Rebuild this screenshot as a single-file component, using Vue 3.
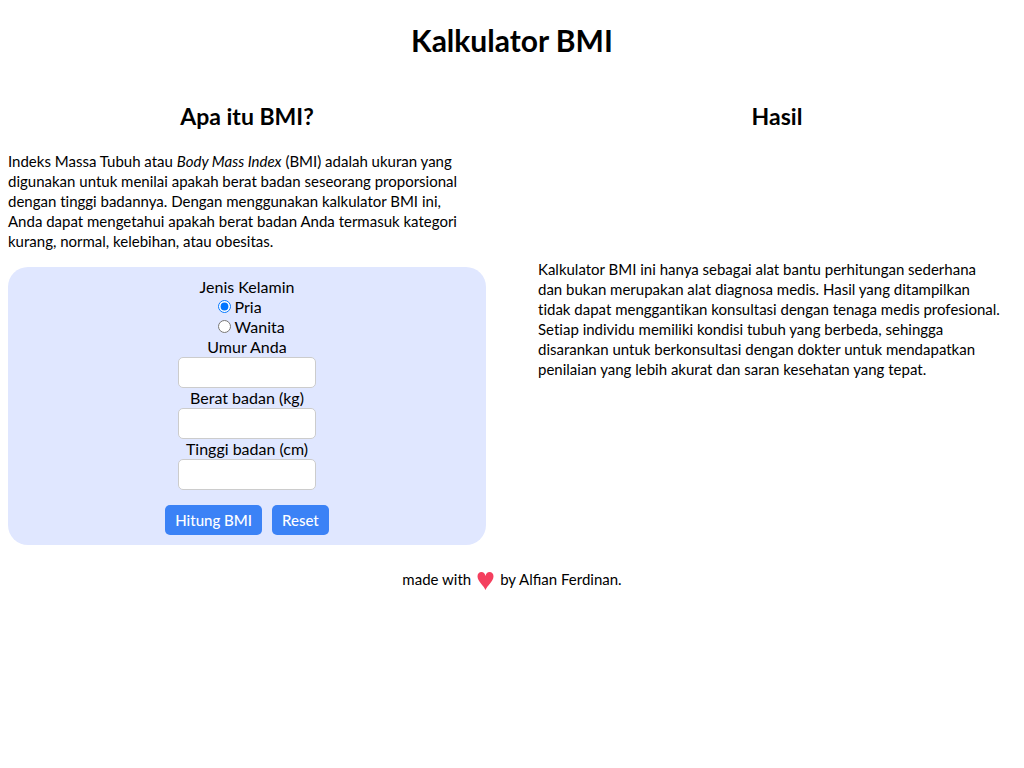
<script setup>
import { ref } from 'vue'

const gender = ref('pria')
const age = ref('')
const weight = ref('')
const height = ref('')
const bmi = ref('')

function calculate() {
  const metres = Number(height.value) / 100
  bmi.value = metres > 0 && weight.value ? (Number(weight.value) / (metres * metres)).toFixed(1) : ''
}

function reset() {
  gender.value = 'pria'
  age.value = ''
  weight.value = ''
  height.value = ''
  bmi.value = ''
}
</script>

<template>
  <div class="page">
    <h1>Kalkulator BMI</h1>
    <main class="columns">
      <section>
        <h2>Apa itu BMI?</h2>
        <p class="intro">
          Indeks Massa Tubuh atau <em>Body Mass Index</em> (BMI) adalah ukuran yang digunakan untuk menilai apakah berat badan seseorang proporsional dengan tinggi badannya. Dengan menggunakan kalkulator BMI ini, Anda dapat mengetahui apakah berat badan Anda termasuk kategori kurang, normal, kelebihan, atau obesitas.
        </p>
        <form class="card" @submit.prevent="calculate">
          <fieldset>
            <legend>Jenis Kelamin</legend>
            <div class="options">
              <label class="option"><input v-model="gender" type="radio" name="gender" value="pria">Pria</label>
              <label class="option"><input v-model="gender" type="radio" name="gender" value="wanita">Wanita</label>
            </div>
          </fieldset>
          <label for="age">Umur Anda</label>
          <input id="age" v-model="age" class="field" type="text" inputmode="numeric">
          <label for="weight">Berat badan (kg)</label>
          <input id="weight" v-model="weight" class="field" type="text" inputmode="decimal">
          <label for="height">Tinggi badan (cm)</label>
          <input id="height" v-model="height" class="field" type="text" inputmode="decimal">
          <div class="actions">
            <button type="submit">Hitung BMI</button>
            <button type="button" @click="reset">Reset</button>
          </div>
        </form>
      </section>
      <section>
        <h2>Hasil</h2>
        <output class="result">{{ bmi }}</output>
        <p class="note">
          Kalkulator BMI ini hanya sebagai alat bantu perhitungan sederhana dan bukan merupakan alat diagnosa medis. Hasil yang ditampilkan tidak dapat menggantikan konsultasi dengan tenaga medis profesional. Setiap individu memiliki kondisi tubuh yang berbeda, sehingga disarankan untuk berkonsultasi dengan dokter untuk mendapatkan penilaian yang lebih akurat dan saran kesehatan yang tepat.
        </p>
      </section>
    </main>
    <footer>
      <span>made with</span>
      <svg class="heart" viewBox="0 0 16 18" role="img" aria-label="love">
        <path d="M8 18C6.500 14 0 9.500 0 4.300C0 1.800 1.600 0 4 0C6 0 7.400 1.600 8 4C8.600 1.600 10 0 12 0C14.400 0 16 1.800 16 4.300C16 9.500 9.500 14 8 18Z" fill="#f43f5e" />
      </svg>
      <span>by Alfian Ferdinan.</span>
    </footer>
  </div>
</template>

<style>
body {
  background: #fff;
}
</style>

<style scoped>
.page {
  padding: 20px 8px;
  color: #000;
  font: 15px/20px Lato, sans-serif;
}
h1,
h2 {
  margin: 0;
  text-align: center;
  font-weight: 700;
}
h1 {
  font-size: 30px;
  line-height: 40px;
}
h2 {
  font-size: 23px;
  line-height: 28px;
}
p {
  max-width: 466px;
  margin: 0;
  font-variant-ligatures: none;
}
.columns {
  display: grid;
  grid-template-columns: 1fr 1fr;
  gap: 52px;
  margin-top: 42px;
}
.intro {
  margin: 21px 0 16px;
}
.card {
  display: flex;
  flex-direction: column;
  align-items: center;
  padding: 10px;
  border-radius: 20px;
  background: #e0e7ff;
  font-size: 16px;
}
fieldset {
  margin: 0;
  padding: 0;
  border: 0;
  min-width: 0;
}
legend {
  padding: 0;
}
.options {
  display: flex;
  flex-direction: column;
  padding-left: 18px;
}
.option {
  display: flex;
  gap: 4px;
}
.option input {
  width: 13px;
  height: 13px;
  margin: 3px 0;
}
.field {
  box-sizing: border-box;
  width: 138px;
  height: 31px;
  padding: 5px;
  border: 1px solid #ccc;
  border-radius: 5px;
  background: #fff;
  font: inherit;
}
.actions {
  display: flex;
  gap: 10px;
  margin-top: 15px;
}
button {
  padding: 5px 10px;
  border: 0;
  border-radius: 5px;
  background: #3b82f6;
  color: #fff;
  font: inherit;
  font-size: 15px;
  font-weight: 500;
}
.result {
  display: block;
  min-height: 129px;
  text-align: center;
}
footer {
  display: flex;
  justify-content: center;
  gap: 6px;
  margin-top: 24px;
}
.heart {
  width: 17px;
  height: 18px;
  margin-top: 3px;
}
</style>
